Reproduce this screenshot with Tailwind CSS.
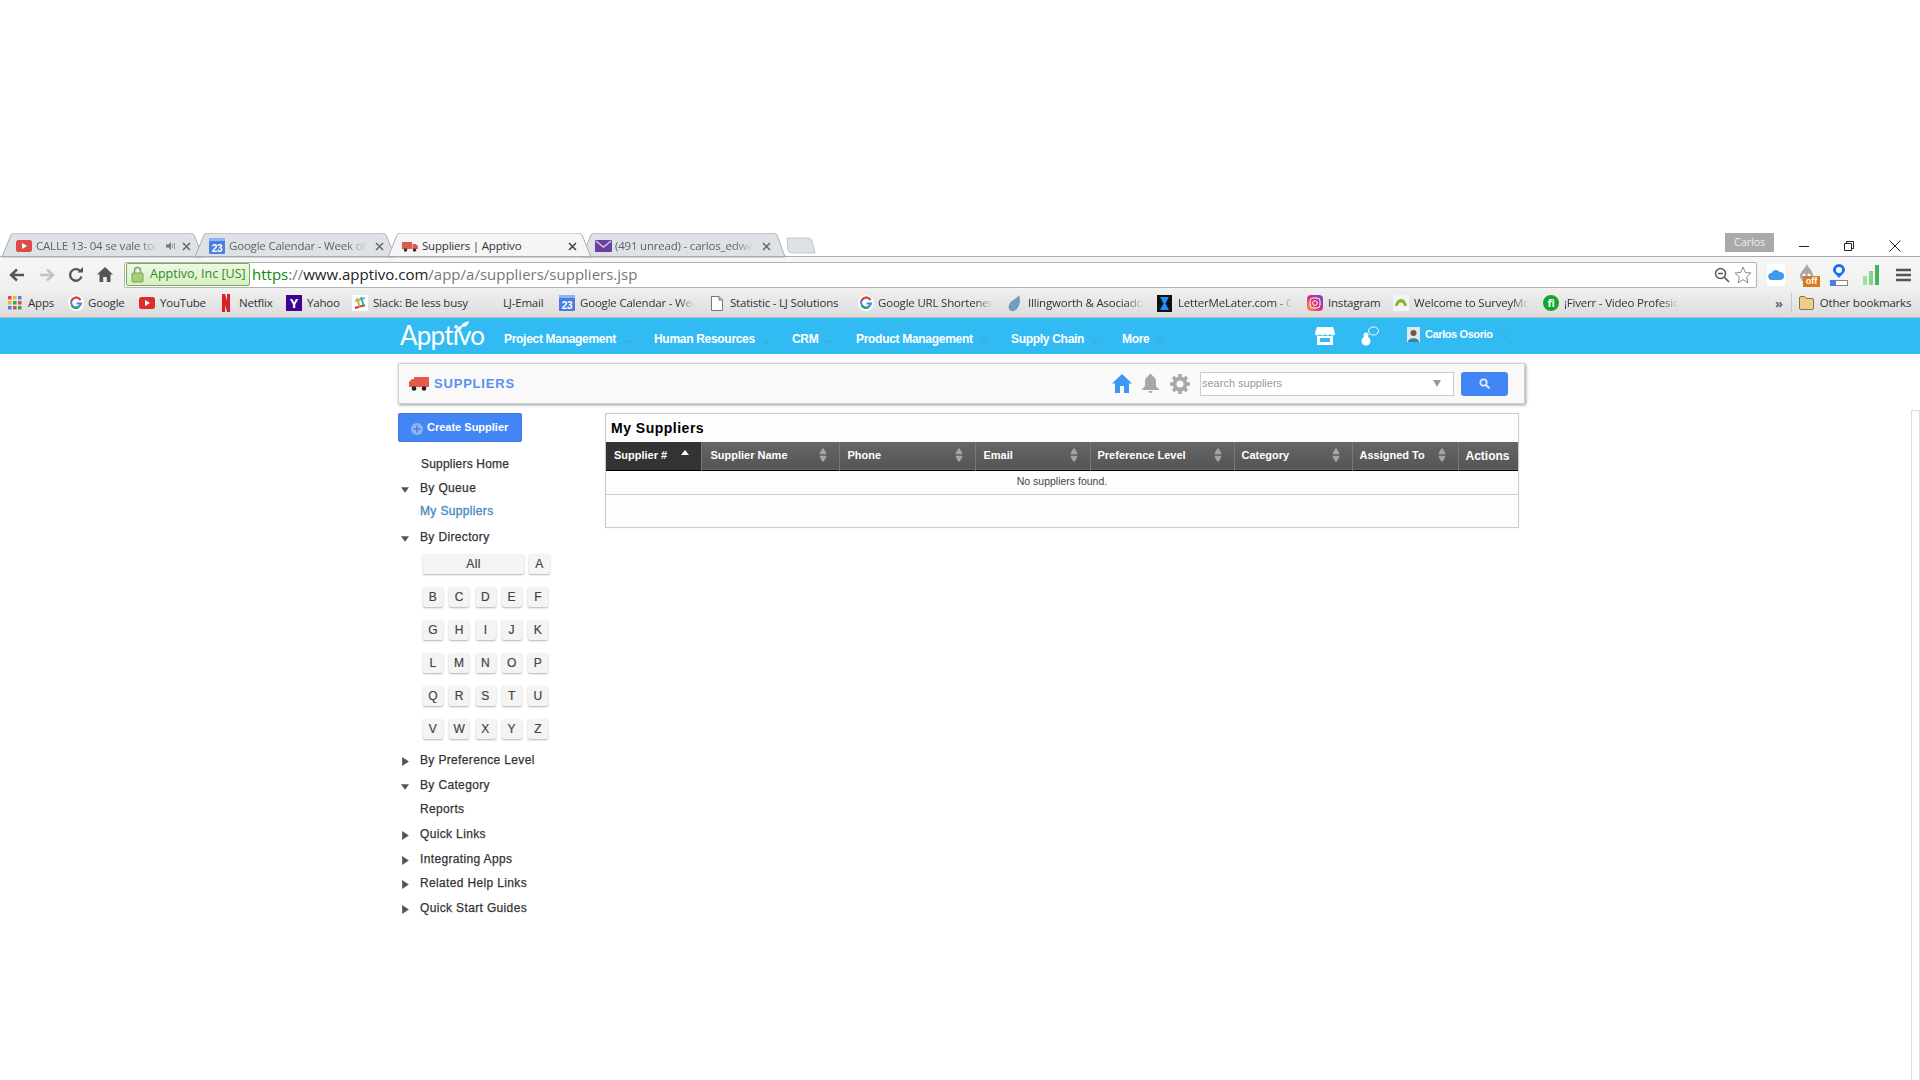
<!DOCTYPE html>
<html lang="en">

<head>
    <meta charset="UTF-8">
    <title>Suppliers | Apptivo</title>
    <script src="https://cdn.jsdelivr.net/npm/@tailwindcss/browser@4"></script>
</head>

<body class="bg-white">
    <div class="relative w-[1920px] h-[1080px] overflow-hidden bg-white font-['Liberation_Sans',sans-serif]">
        <!-- collapsed side panel on the right edge -->
        <div class="absolute left-[1911px] top-[410px] w-[9px] h-[670px] border-l border-t border-r border-[#dddddd]"></div>

        <div class="h-[233px]"></div>

        <!-- browser tabs -->
        <div class="relative h-[24px] font-['Open_Sans',sans-serif] text-[11.5px] tracking-[-0.2px] text-[#5f6368]">
            <svg class="absolute left-0 top-0" width="820" height="25" viewBox="0 0 820 25">
                <path d="M2 24 L11 2 Q12 0 15 0 L190 0 Q193 0 194 2 L203 24 Z" fill="#dee1e6" stroke="#a9abb0" />
                <path d="M195 24 L204 2 Q205 0 208 0 L382 0 Q385 0 386 2 L395 24 Z" fill="#dee1e6" stroke="#a9abb0" />
                <path d="M582 24 L591 2 Q592 0 595 0 L773 0 Q776 0 777 2 L785 24 Z" fill="#dee1e6" stroke="#a9abb0" />
                <path d="M388 24 L397 2 Q398 0 401 0 L578 0 Q581 0 582 2 L591 24 Z" fill="#f5f5f5" stroke="#a9abb0" />
                <path d="M787 5 L808 5 Q811 5 812 8 L815 20 L792 20 Q789 20 788 17 Z" fill="#dee1e6" stroke="#c4c6ca" />
            </svg>
            <div class="absolute left-0 right-0 top-[23px] h-px bg-[#a9abb0]"></div>
            <div class="relative flex h-full pl-[16px] pr-[19px] pt-[2px]">
                <div class="flex items-center w-[193px]">
                    <svg width="16" height="12" viewBox="0 0 16 12"><rect width="16" height="12" rx="2.5" fill="#dd4b4b" /><path d="M6 3 L11 6 L6 9 Z" fill="#fff" /></svg>
                    <span class="ml-[4px] w-[122px] overflow-hidden whitespace-nowrap [mask-image:linear-gradient(90deg,#000_85%,transparent)]">CALLE 13- 04 se vale tocar</span>
                    <svg class="ml-[8px]" width="10" height="10" viewBox="0 0 10 10"><path d="M0 3.5 H2.5 L5 1 V9 L2.5 6.5 H0 Z" fill="#777" /><path d="M6.5 3 V7 M8.5 2 V8" stroke="#999" /></svg>
                    <svg class="ml-[6px]" width="9" height="9" viewBox="0 0 9 9"><path d="M1 1 L8 8 M8 1 L1 8" stroke="#6b6b6b" stroke-width="1.6" /></svg>
                </div>
                <div class="flex items-center w-[193px]">
                    <svg width="16" height="16" viewBox="0 0 16 16"><rect width="16" height="16" rx="1" fill="#4a7fe0" /><rect width="16" height="3" fill="#8fb3f0" /><text x="8" y="13.5" font-size="10" font-weight="700" text-anchor="middle" fill="#fff" font-family="Liberation Sans">23</text></svg>
                    <span class="ml-[4px] w-[138px] overflow-hidden whitespace-nowrap [mask-image:linear-gradient(90deg,#000_85%,transparent)]">Google Calendar - Week of</span>
                    <svg class="ml-[8px]" width="9" height="9" viewBox="0 0 9 9"><path d="M1 1 L8 8 M8 1 L1 8" stroke="#6b6b6b" stroke-width="1.6" /></svg>
                </div>
                <div class="flex items-center w-[193px] text-[#333]">
                    <svg width="16" height="12" viewBox="0 0 16 12"><path d="M0 2 H10 V9 H0 Z M10.500 4 H14 L16 6.500 V9 H10.500 Z" fill="#dd5a4d" /><circle cx="3.500" cy="10" r="1.800" fill="#333" /><circle cx="12.500" cy="10" r="1.800" fill="#333" /></svg>
                    <span class="ml-[4px] w-[146px] whitespace-nowrap">Suppliers | Apptivo</span>
                    <svg width="9" height="9" viewBox="0 0 9 9"><path d="M1 1 L8 8 M8 1 L1 8" stroke="#444" stroke-width="1.6" /></svg>
                </div>
                <div class="flex items-center w-[180px]">
                    <svg width="17" height="12" viewBox="0 0 17 12"><rect width="17" height="12" rx="1" fill="#6b3fa0" /><path d="M1 1 L8.500 7 L16 1" fill="none" stroke="#d9c7ee" stroke-width="1.500" /></svg>
                    <span class="ml-[3px] w-[139px] overflow-hidden whitespace-nowrap [mask-image:linear-gradient(90deg,#000_85%,transparent)]">(491 unread) - carlos_edward</span>
                    <svg class="ml-[8px]" width="9" height="9" viewBox="0 0 9 9"><path d="M1 1 L8 8 M8 1 L1 8" stroke="#6b6b6b" stroke-width="1.6" /></svg>
                </div>
                <div class="flex-1"></div>
                <div class="h-[19px] w-[49px] mr-[26px] -mt-[2px] bg-[#aaaaaa] text-[#eee] text-[11px] flex items-center justify-center">Carlos</div>
                <div class="flex items-center gap-[35px] h-[22px] -ml-[1px]">
                    <svg width="10" height="10" viewBox="0 0 10 10"><path d="M0 5.500 H10" stroke="#222" /></svg>
                    <svg width="10" height="10" viewBox="0 0 10 10"><path d="M0.500 2.500 H7.500 V9.500 H0.500 Z M2.500 2.500 V0.500 H9.500 V7.500 H7.500" fill="none" stroke="#222" /></svg>
                    <svg width="12" height="12" viewBox="0 0 12 12"><path d="M0.500 0.500 L11.500 11.500 M11.500 0.500 L0.500 11.500" stroke="#222" /></svg>
                </div>
            </div>
        </div>

        <!-- address bar -->
        <div class="flex items-center h-[32px] pt-[3px] pl-[9px] pr-[8px] bg-gradient-to-b from-[#f6f6f6] to-[#f0f0f0]">
            <svg width="16" height="14" viewBox="0 0 16 14"><path d="M15 7 H3 M8 1.500 L2 7 L8 12.500" fill="none" stroke="#555" stroke-width="2.400" /></svg>
            <svg class="ml-[14px]" width="16" height="14" viewBox="0 0 16 14"><path d="M1 7 H13 M8 1.500 L14 7 L8 12.500" fill="none" stroke="#c2c2c2" stroke-width="2.400" /></svg>
            <svg class="ml-[13px]" width="16" height="16" viewBox="0 0 16 16"><path d="M13.500 9.500 A5.800 5.800 0 1 1 12 3.800" fill="none" stroke="#555" stroke-width="2.300" /><path d="M9.500 5.500 H15 V0 Z" fill="#555" /></svg>
            <svg class="ml-[13px]" width="16" height="15" viewBox="0 0 16 15"><path d="M8 0 L16 7.500 H13.500 V15 H9.800 V10 H6.200 V15 H2.500 V7.500 H0 Z" fill="#555" /></svg>
            <div class="ml-[11px] flex items-center w-[1633px] h-[26px] bg-white border border-[#b4b4b4] rounded-[2px] pl-[1px] pr-[4px]">
                <div class="flex items-center w-[124px] h-[23px] bg-gradient-to-b from-[#eef8e2] to-[#d9efc4] border border-[#74ad55] rounded-[2px] pl-[4px]">
                    <svg width="13" height="17" viewBox="0 0 13 17"><path d="M3.500 7 V4.500 A3 3 0 0 1 9.500 4.500 V7" fill="none" stroke="#8a9a80" stroke-width="1.500" /><rect x="1" y="7" width="11" height="9" rx="1" fill="#a6cf76" stroke="#7da35a" /></svg>
                    <span class="ml-[6px] text-[12.5px] text-[#2e8b1f] font-['Open_Sans',sans-serif] whitespace-nowrap">Apptivo, Inc [US]</span>
                </div>
                <div class="ml-[2px] text-[15px] font-['Open_Sans',sans-serif] whitespace-nowrap text-[#777]"><span class="text-[#0a8a0a]">https</span>://<span class="text-[#222]">www.apptivo.com</span>/app/a/suppliers/suppliers.jsp</div>
                <div class="flex-1"></div>
                <svg width="16" height="16" viewBox="0 0 16 16"><circle cx="6.500" cy="6.500" r="5" fill="none" stroke="#555" stroke-width="1.500" /><path d="M4 6.500 H9 M10.500 10.500 L15 15" stroke="#555" stroke-width="1.600" /></svg>
                <svg class="ml-[4px]" width="18" height="18" viewBox="0 0 18 18"><path d="M9 1 L11.300 6.500 L17 7 L12.700 10.800 L14 16.800 L9 13.600 L4 16.800 L5.300 10.800 L1 7 L6.700 6.500 Z" fill="#fff" stroke="#8a8a8a" /></svg>
            </div>
            <div class="ml-[10px] flex items-center justify-center w-[18px] h-[22px] bg-white rounded-[3px]">
                <svg width="16" height="11" viewBox="0 0 16 11"><path d="M4 11 A3.500 3.500 0 0 1 3.500 4 A4.500 4.500 0 0 1 11.500 3 A4 4 0 0 1 12.500 11 Z" fill="#3e9bea" /></svg>
            </div>
            <div class="ml-[13px] relative w-[22px] h-[24px] mt-[2px]">
                <svg width="18" height="20" viewBox="0 0 18 20"><path d="M9 0 C10 4 15 6 15 12 A6.500 6.500 0 0 1 2 12 C2 8 6 6 9 0 Z" fill="#a8a8a8" /><circle cx="6" cy="11" r="1.500" fill="#fff" /><circle cx="11" cy="11" r="1.500" fill="#fff" /></svg>
                <span class="absolute left-[5px] top-[12px] w-[17px] h-[11px] bg-[#d9791c] text-white text-[9px] font-bold leading-[11px] text-center">off</span>
            </div>
            <svg class="ml-[9px]" width="20" height="22" viewBox="0 0 20 22"><path d="M10 0 A6 6 0 0 1 16 6 C16 9 12 11 10 14 C8 11 4 9 4 6 A6 6 0 0 1 10 0 Z" fill="#1a73e8" /><circle cx="10" cy="6" r="3" fill="#fff" /><rect x="1.500" y="16.500" width="17" height="5" fill="#fff" stroke="#888" /><rect x="1" y="16" width="6" height="6" fill="#4a7fe0" /></svg>
            <svg class="ml-[14px]" width="16" height="20" viewBox="0 0 16 20"><rect y="11" width="4" height="9" fill="#9be29b" /><rect x="6" y="6" width="4" height="14" fill="#7fd68a" /><rect x="12" y="0" width="4" height="20" fill="#47b35f" /></svg>
            <svg class="ml-[17px]" width="15" height="14" viewBox="0 0 15 14"><path d="M0 2 H15 M0 7 H15 M0 12 H15" stroke="#555" stroke-width="2.600" /></svg>
        </div>

        <!-- bookmarks -->
        <div class="flex items-center h-[29px] pl-[8px] bg-gradient-to-b from-[#f0f0f0] to-[#dcdcdc] border-b border-[#b8b8b8] text-[11.5px] tracking-[-0.2px] text-[#333] font-['Open_Sans',sans-serif] whitespace-nowrap">
            <div class="flex items-center w-[60px]">
                <svg width="14" height="14" viewBox="0 0 14 14"><rect width="3.500" height="3.500" fill="#e04a3f" /><rect x="5" width="3.500" height="3.500" fill="#f2b632" /><rect x="10" width="3.500" height="3.500" fill="#4285f4" /><rect y="5" width="3.500" height="3.500" fill="#f2b632" /><rect x="5" y="5" width="3.500" height="3.500" fill="#34a853" /><rect x="10" y="5" width="3.500" height="3.500" fill="#e04a3f" /><rect y="10" width="3.500" height="3.500" fill="#4285f4" /><rect x="5" y="10" width="3.500" height="3.500" fill="#e04a3f" /><rect x="10" y="10" width="3.500" height="3.500" fill="#34a853" /></svg>
                <span class="ml-[6px]">Apps</span>
            </div>
            <div class="flex items-center w-[71px]">
                <svg width="16" height="16" viewBox="0 0 16 16"><circle cx="8" cy="8" r="8" fill="#fff" /><path d="M12.500 5 A5 5 0 1 0 13 8.500 H8.500" fill="none" stroke="#4285f4" stroke-width="2" /><path d="M12.500 5 A5 5 0 0 0 3.500 6" fill="none" stroke="#ea4335" stroke-width="2" /><path d="M3.500 10.500 A5 5 0 0 0 11 12" fill="none" stroke="#34a853" stroke-width="2" /></svg>
                <span class="ml-[4px]">Google</span>
            </div>
            <div class="flex items-center w-[81px]">
                <svg width="16" height="12" viewBox="0 0 16 12"><rect width="16" height="12" rx="2.500" fill="#dd2c2c" /><path d="M6 3 L11 6 L6 9 Z" fill="#fff" /></svg>
                <span class="ml-[5px]">YouTube</span>
            </div>
            <div class="flex items-center w-[66px]">
                <svg class="ml-[2px]" width="8" height="18" viewBox="0 0 8 18"><path d="M0 0 H3 L5 7 V0 H8 V18 H5 L3 11 V18 H0 Z" fill="#d81f26" /></svg>
                <span class="ml-[9px]">Netflix</span>
            </div>
            <div class="flex items-center w-[66px]">
                <div class="w-[16px] h-[16px] bg-[#400090] text-white text-[13px] font-bold leading-[16px] text-center">Y</div>
                <span class="ml-[5px]">Yahoo</span>
            </div>
            <div class="flex items-center w-[130px]">
                <svg width="16" height="16" viewBox="0 0 16 16"><rect width="16" height="16" fill="#fff" /><path d="M3 6 L13 3" stroke="#62c5d8" stroke-width="2" /><path d="M3 13 L13 10" stroke="#e01e5a" stroke-width="2" /><path d="M5 3 L8 13" stroke="#e9a820" stroke-width="2" /><path d="M9 2 L12 12" stroke="#3eb991" stroke-width="2" /></svg>
                <span class="ml-[5px]">Slack: Be less busy</span>
            </div>
            <div class="w-[77px] pl-[21px]">LJ-Email</div>
            <div class="flex items-center w-[152px]">
                <svg width="16" height="16" viewBox="0 0 16 16"><rect width="16" height="16" rx="1" fill="#4a7fe0" /><rect width="16" height="3" fill="#8fb3f0" /><text x="8" y="13.500" font-size="10" font-weight="700" text-anchor="middle" fill="#fff" font-family="Liberation Sans">23</text></svg>
                <span class="ml-[5px] w-[115px] overflow-hidden [mask-image:linear-gradient(90deg,#000_85%,transparent)]">Google Calendar - Week</span>
            </div>
            <div class="flex items-center w-[147px]">
                <svg width="12" height="15" viewBox="0 0 12 15"><path d="M0.500 0.500 H8 L11.500 4 V14.500 H0.500 Z M8 0.500 V4 H11.500" fill="#fff" stroke="#777" /></svg>
                <span class="ml-[7px]">Statistic - LJ Solutions</span>
            </div>
            <div class="flex items-center w-[149px]">
                <svg width="16" height="16" viewBox="0 0 16 16"><circle cx="8" cy="8" r="8" fill="#fff" /><path d="M12.500 5 A5 5 0 1 0 13 8.500 H8.500" fill="none" stroke="#4285f4" stroke-width="2" /><path d="M12.500 5 A5 5 0 0 0 3.500 6" fill="none" stroke="#ea4335" stroke-width="2" /><path d="M3.500 10.500 A5 5 0 0 0 11 12" fill="none" stroke="#34a853" stroke-width="2" /></svg>
                <span class="ml-[4px] w-[115px] overflow-hidden [mask-image:linear-gradient(90deg,#000_85%,transparent)]">Google URL Shortener</span>
            </div>
            <div class="flex items-center w-[150px]">
                <svg width="15" height="17" viewBox="0 0 15 17"><path d="M12 0 C14 6 13 13 7 16 C2 17 0 12 3 8 C5 5 9 4 12 0 Z" fill="#6f9fb8" /></svg>
                <span class="ml-[6px] w-[115px] overflow-hidden [mask-image:linear-gradient(90deg,#000_85%,transparent)]">Illingworth &amp; Asociados</span>
            </div>
            <div class="flex items-center w-[150px]">
                <svg width="15" height="17" viewBox="0 0 15 17"><rect width="15" height="17" fill="#111" /><path d="M3 2 H12 L8.500 8.500 L12 15 H3 L6.500 8.500 Z" fill="#1e90ff" /></svg>
                <span class="ml-[6px] w-[115px] overflow-hidden [mask-image:linear-gradient(90deg,#000_85%,transparent)]">LetterMeLater.com - Cor</span>
            </div>
            <div class="flex items-center w-[86px]">
                <svg width="16" height="16" viewBox="0 0 16 16"><defs><linearGradient id="ig" x1="0" y1="1" x2="1" y2="0"><stop offset="0" stop-color="#f9a23c" /><stop offset="0.500" stop-color="#d62f7e" /><stop offset="1" stop-color="#6a4bd0" /></linearGradient></defs><rect width="16" height="16" rx="4" fill="url(#ig)" /><rect x="3" y="3" width="10" height="10" rx="3" fill="none" stroke="#fff" /><circle cx="8" cy="8" r="2.300" fill="none" stroke="#fff" /></svg>
                <span class="ml-[5px]">Instagram</span>
            </div>
            <div class="flex items-center w-[150px]">
                <svg width="16" height="16" viewBox="0 0 16 16"><rect width="16" height="16" fill="#f4f4f4" /><path d="M2 11 C3 5 6 4 8 4 C10 4 13 5 14 11 L11 11 C10.500 8 9 7.500 8 7.500 C7 7.500 5.500 8 5 11 Z" fill="#8ab834" /></svg>
                <span class="ml-[5px] w-[115px] overflow-hidden [mask-image:linear-gradient(90deg,#000_85%,transparent)]">Welcome to SurveyMonkey</span>
            </div>
            <div class="flex items-center w-[232px]">
                <div class="w-[16px] h-[16px] rounded-full bg-[#11a82c] text-white text-[11px] font-bold leading-[16px] text-center">fi</div>
                <span class="ml-[5px] w-[115px] overflow-hidden [mask-image:linear-gradient(90deg,#000_85%,transparent)]">¡Fiverr - Video Profesional</span>
            </div>
            <span class="text-[#666] font-bold text-[13px] leading-none">»</span>
            <div class="ml-[8px] w-px h-[20px] bg-[#c8c8c8]"></div>
            <svg class="ml-[7px]" width="15" height="14" viewBox="0 0 15 14"><path d="M0.500 2 Q0.500 0.500 2 0.500 H5.500 L7 2.500 H13 Q14.500 2.500 14.500 4 V12 Q14.500 13.500 13 13.500 H2 Q0.500 13.500 0.500 12 Z" fill="#f1cc8a" stroke="#8b7043" /></svg>
            <span class="ml-[6px]">Other bookmarks</span>
        </div>

        <!-- app nav -->
        <div class="flex items-center h-[36px] pl-[400px] bg-[#32bbf3] text-white text-[12px] font-bold">
            <div class="relative w-[104px] h-full text-[26px] font-['Lato',sans-serif] font-normal leading-[34px] tracking-[-0.8px]">Apptivo
                <svg class="absolute left-[55px] top-[3px]" width="16" height="12" viewBox="0 0 16 12"><path d="M1 11 C1 6 5 5 7 5 C7 8 5 11 1 11 Z M6 5 C7 2 11 1 14 0 C14 3 11 6 8 6 Z" fill="#fff" /></svg>
            </div>
            <div class="flex items-center w-[150px] pt-[5px]"><span class="tracking-[-0.3px]">Project Management</span><svg class="ml-[7px] mt-[5px]" width="8" height="5" viewBox="0 0 8 5"><path d="M1 1 L4 4 L7 1" fill="none" stroke="#5f97b0" /></svg></div>
            <div class="flex items-center w-[138px] pt-[5px]"><span class="tracking-[-0.3px]">Human Resources</span><svg class="ml-[7px] mt-[5px]" width="8" height="5" viewBox="0 0 8 5"><path d="M1 1 L4 4 L7 1" fill="none" stroke="#5f97b0" /></svg></div>
            <div class="flex items-center w-[64px] pt-[5px]"><span class="tracking-[-0.3px]">CRM</span><svg class="ml-[7px] mt-[5px]" width="8" height="5" viewBox="0 0 8 5"><path d="M1 1 L4 4 L7 1" fill="none" stroke="#5f97b0" /></svg></div>
            <div class="flex items-center w-[155px] pt-[5px]"><span class="tracking-[-0.3px]">Product Management</span><svg class="ml-[7px] mt-[5px]" width="8" height="5" viewBox="0 0 8 5"><path d="M1 1 L4 4 L7 1" fill="none" stroke="#5f97b0" /></svg></div>
            <div class="flex items-center w-[111px] pt-[5px]"><span class="tracking-[-0.3px]">Supply Chain</span><svg class="ml-[7px] mt-[5px]" width="8" height="5" viewBox="0 0 8 5"><path d="M1 1 L4 4 L7 1" fill="none" stroke="#5f97b0" /></svg></div>
            <div class="flex items-center w-[193px] pt-[5px]"><span class="tracking-[-0.3px]">More</span><svg class="ml-[7px] mt-[5px]" width="8" height="5" viewBox="0 0 8 5"><path d="M1 1 L4 4 L7 1" fill="none" stroke="#5f97b0" /></svg></div>
            <svg width="20" height="18" viewBox="0 0 20 18"><path d="M2 0 H18 L20 6 A2.500 2.500 0 0 1 15 6 A2.500 2.500 0 0 1 10 6 A2.500 2.500 0 0 1 5 6 A2.500 2.500 0 0 1 0 6 Z" fill="#fff" /><path d="M2 9 H18 V18 H2 Z M5 11 V15 H15 V11 Z" fill="#fff" /></svg>
            <svg class="ml-[26px]" width="18" height="20" viewBox="0 0 18 20"><circle cx="5" cy="15" r="4.500" fill="#fff" /><circle cx="5" cy="9" r="2.500" fill="#fff" /><ellipse cx="12.500" cy="5" rx="5" ry="4" fill="none" stroke="#fff" /></svg>
            <div class="ml-[28px] mb-[4px] w-[13px] h-[15px] bg-[#dfe8ee] flex items-end justify-center overflow-hidden">
                <svg width="11" height="13" viewBox="0 0 11 13"><circle cx="5.500" cy="4" r="3" fill="#6b5a4e" /><path d="M0 13 C0 8 11 8 11 13 Z" fill="#3f7fa6" /></svg>
            </div>
            <span class="ml-[5px] mb-[4px] tracking-[-0.4px] text-[11px]">Carlos Osorio</span>
            <svg class="ml-[8px] mb-[1px]" width="8" height="5" viewBox="0 0 8 5"><path d="M1 1 L4 4 L7 1" fill="none" stroke="#5f97b0" /></svg>
        </div>

        <div class="ml-[398px] w-[1127px] pt-[9px]">
            <!-- module header -->
            <div class="flex items-center h-[41px] pl-[10px] pr-[16px] bg-[#f9f9f9] border border-[#d2d2d2] shadow-[1px_1px_3px_rgba(0,0,0,0.4)]">
                <svg width="20" height="14" viewBox="0 0 20 14"><path d="M5 0 H20 V10 H0 V5 L3 2 H5 Z" fill="#e8574c" /><circle cx="5" cy="11.500" r="2.300" fill="#222" /><circle cx="15" cy="11.500" r="2.300" fill="#222" /></svg>
                <span class="ml-[5px] text-[13px] font-bold tracking-[0.8px] text-[#5b8ff0]">SUPPLIERS</span>
                <div class="flex-1"></div>
                <svg width="20" height="19" viewBox="0 0 20 19"><path d="M10 0 L20 9.500 H17 V19 H12 V12 H8 V19 H3 V9.500 H0 Z" fill="#3f97f5" /></svg>
                <svg class="ml-[9px]" width="19" height="19" viewBox="0 0 19 19"><path d="M9.500 0 A2 2 0 0 1 11.500 2 C14 3 15 5 15 8 V12 L18.500 16 H0.500 L4 12 V8 C4 5 5 3 7.500 2 A2 2 0 0 1 9.500 0 Z M7.500 17 H11.500 A2 2 0 0 1 7.500 17 Z" fill="#a8a8a8" /></svg>
                <svg class="ml-[10px]" width="20" height="20" viewBox="0 0 20 20"><circle cx="10" cy="10" r="5.500" fill="none" stroke="#a8a8a8" stroke-width="4" /><path d="M10 0 V4 M10 16 V20 M0 10 H4 M16 10 H20 M3 3 L5.800 5.800 M14.200 14.200 L17 17 M17 3 L14.200 5.800 M5.800 14.200 L3 17" stroke="#a8a8a8" stroke-width="3.500" /></svg>
                <div class="ml-[10px] flex items-center justify-between w-[254px] h-[24px] pl-[1px] pr-[12px] bg-white border border-[#cccccc] text-[11px] text-[#999]">
                    <span>search suppliers</span>
                    <svg width="8" height="7" viewBox="0 0 8 7"><path d="M0 0 H8 L4 7 Z" fill="#999" /></svg>
                </div>
                <div class="ml-[7px] flex items-center justify-center w-[47px] h-[24px] bg-[#4285f4] rounded-[3px]">
                    <svg width="11" height="11" viewBox="0 0 11 11"><circle cx="4.500" cy="4.500" r="3.200" fill="none" stroke="#dce8ff" stroke-width="1.800" /><path d="M7 7 L10.500 10.500" stroke="#dce8ff" stroke-width="2" /></svg>
                </div>
            </div>

            <div class="flex pt-[9px]">
                <!-- sidebar -->
                <div class="w-[207px] text-[12px] text-[#333] [-webkit-text-stroke:0.25px] tracking-[0.35px]">
                    <div class="flex items-center w-[124px] h-[29px] pl-[12px] bg-[#4285f4] border border-[#3b78e0] rounded-[2px] text-[11px] font-bold text-white [-webkit-text-stroke:0px] tracking-[0px]">
                        <svg class="mt-[2px]" width="12" height="12" viewBox="0 0 12 12"><circle cx="6" cy="6" r="6" fill="#8fb3f5" /><path d="M6 2.500 V9.500 M2.500 6 H9.500" stroke="#4f7fdc" stroke-width="1.600" /></svg>
                        <span class="ml-[4px]">Create Supplier</span>
                    </div>
                    <div class="flex items-center h-[24px] mt-[10px] pl-[23px] tracking-[0.2px]">Suppliers Home</div>
                    <div class="flex items-center h-[24px] pl-[3px]"><svg class="mr-[11px] mt-[3px]" width="8" height="6" viewBox="0 0 9 6"><path d="M0 0 H9 L4.500 6 Z" fill="#555" /></svg>By Queue</div>
                    <div class="flex items-center h-[22px] pl-[22px] text-[#4a8ac4] [-webkit-text-stroke:0.35px]">My Suppliers</div>
                    <div class="flex items-center h-[24px] mt-[3px] pl-[3px]"><svg class="mr-[11px] mt-[3px]" width="8" height="6" viewBox="0 0 9 6"><path d="M0 0 H9 L4.500 6 Z" fill="#555" /></svg>By Directory</div>

                    <div class="ml-[25px] mt-[5px] flex flex-col gap-[13px] text-[#444] [-webkit-text-stroke:0.2px]">
                        <div class="flex gap-[5px]">
                            <div class="w-[101px] h-[20px] flex items-center justify-center bg-[#f4f4f4] rounded-[2px] shadow-[0_1px_2px_rgba(0,0,0,0.3)]">All</div>
                            <div class="w-[21px] h-[20px] flex items-center justify-center bg-[#f4f4f4] rounded-[2px] shadow-[0_1px_2px_rgba(0,0,0,0.3)]">A</div>
                        </div>
                        <div class="grid grid-cols-[20px_20px_20px_20px_20px] gap-x-[6.25px] gap-y-[13px]">
                            <div class="h-[20px] flex items-center justify-center bg-[#f4f4f4] rounded-[2px] shadow-[0_1px_2px_rgba(0,0,0,0.3)]">B</div>
                            <div class="h-[20px] flex items-center justify-center bg-[#f4f4f4] rounded-[2px] shadow-[0_1px_2px_rgba(0,0,0,0.3)]">C</div>
                            <div class="h-[20px] flex items-center justify-center bg-[#f4f4f4] rounded-[2px] shadow-[0_1px_2px_rgba(0,0,0,0.3)]">D</div>
                            <div class="h-[20px] flex items-center justify-center bg-[#f4f4f4] rounded-[2px] shadow-[0_1px_2px_rgba(0,0,0,0.3)]">E</div>
                            <div class="h-[20px] flex items-center justify-center bg-[#f4f4f4] rounded-[2px] shadow-[0_1px_2px_rgba(0,0,0,0.3)]">F</div>
                            <div class="h-[20px] flex items-center justify-center bg-[#f4f4f4] rounded-[2px] shadow-[0_1px_2px_rgba(0,0,0,0.3)]">G</div>
                            <div class="h-[20px] flex items-center justify-center bg-[#f4f4f4] rounded-[2px] shadow-[0_1px_2px_rgba(0,0,0,0.3)]">H</div>
                            <div class="h-[20px] flex items-center justify-center bg-[#f4f4f4] rounded-[2px] shadow-[0_1px_2px_rgba(0,0,0,0.3)]">I</div>
                            <div class="h-[20px] flex items-center justify-center bg-[#f4f4f4] rounded-[2px] shadow-[0_1px_2px_rgba(0,0,0,0.3)]">J</div>
                            <div class="h-[20px] flex items-center justify-center bg-[#f4f4f4] rounded-[2px] shadow-[0_1px_2px_rgba(0,0,0,0.3)]">K</div>
                            <div class="h-[20px] flex items-center justify-center bg-[#f4f4f4] rounded-[2px] shadow-[0_1px_2px_rgba(0,0,0,0.3)]">L</div>
                            <div class="h-[20px] flex items-center justify-center bg-[#f4f4f4] rounded-[2px] shadow-[0_1px_2px_rgba(0,0,0,0.3)]">M</div>
                            <div class="h-[20px] flex items-center justify-center bg-[#f4f4f4] rounded-[2px] shadow-[0_1px_2px_rgba(0,0,0,0.3)]">N</div>
                            <div class="h-[20px] flex items-center justify-center bg-[#f4f4f4] rounded-[2px] shadow-[0_1px_2px_rgba(0,0,0,0.3)]">O</div>
                            <div class="h-[20px] flex items-center justify-center bg-[#f4f4f4] rounded-[2px] shadow-[0_1px_2px_rgba(0,0,0,0.3)]">P</div>
                            <div class="h-[20px] flex items-center justify-center bg-[#f4f4f4] rounded-[2px] shadow-[0_1px_2px_rgba(0,0,0,0.3)]">Q</div>
                            <div class="h-[20px] flex items-center justify-center bg-[#f4f4f4] rounded-[2px] shadow-[0_1px_2px_rgba(0,0,0,0.3)]">R</div>
                            <div class="h-[20px] flex items-center justify-center bg-[#f4f4f4] rounded-[2px] shadow-[0_1px_2px_rgba(0,0,0,0.3)]">S</div>
                            <div class="h-[20px] flex items-center justify-center bg-[#f4f4f4] rounded-[2px] shadow-[0_1px_2px_rgba(0,0,0,0.3)]">T</div>
                            <div class="h-[20px] flex items-center justify-center bg-[#f4f4f4] rounded-[2px] shadow-[0_1px_2px_rgba(0,0,0,0.3)]">U</div>
                            <div class="h-[20px] flex items-center justify-center bg-[#f4f4f4] rounded-[2px] shadow-[0_1px_2px_rgba(0,0,0,0.3)]">V</div>
                            <div class="h-[20px] flex items-center justify-center bg-[#f4f4f4] rounded-[2px] shadow-[0_1px_2px_rgba(0,0,0,0.3)]">W</div>
                            <div class="h-[20px] flex items-center justify-center bg-[#f4f4f4] rounded-[2px] shadow-[0_1px_2px_rgba(0,0,0,0.3)]">X</div>
                            <div class="h-[20px] flex items-center justify-center bg-[#f4f4f4] rounded-[2px] shadow-[0_1px_2px_rgba(0,0,0,0.3)]">Y</div>
                            <div class="h-[20px] flex items-center justify-center bg-[#f4f4f4] rounded-[2px] shadow-[0_1px_2px_rgba(0,0,0,0.3)]">Z</div>
                        </div>
                    </div>

                    <div class="flex items-center h-[24px] mt-[9px] pl-[4px]"><svg class="mr-[11px] mt-[3px]" width="7" height="9" viewBox="0 0 6 8"><path d="M0 0 V8 L6 4 Z" fill="#555" /></svg>By Preference Level</div>
                    <div class="flex items-center h-[24px] mt-[1px] pl-[3px]"><svg class="mr-[11px] mt-[3px]" width="8" height="6" viewBox="0 0 9 6"><path d="M0 0 H9 L4.500 6 Z" fill="#555" /></svg>By Category</div>
                    <div class="flex items-center h-[24px] pl-[22px]">Reports</div>
                    <div class="flex items-center h-[24px] mt-[1px] pl-[4px]"><svg class="mr-[11px] mt-[3px]" width="7" height="9" viewBox="0 0 6 8"><path d="M0 0 V8 L6 4 Z" fill="#555" /></svg>Quick Links</div>
                    <div class="flex items-center h-[24px] mt-[1px] pl-[4px]"><svg class="mr-[11px] mt-[3px]" width="7" height="9" viewBox="0 0 6 8"><path d="M0 0 V8 L6 4 Z" fill="#555" /></svg>Integrating Apps</div>
                    <div class="flex items-center h-[24px] pl-[4px]"><svg class="mr-[11px] mt-[3px]" width="7" height="9" viewBox="0 0 6 8"><path d="M0 0 V8 L6 4 Z" fill="#555" /></svg>Related Help Links</div>
                    <div class="flex items-center h-[24px] mt-[1px] pl-[4px]"><svg class="mr-[11px] mt-[3px]" width="7" height="9" viewBox="0 0 6 8"><path d="M0 0 V8 L6 4 Z" fill="#555" /></svg>Quick Start Guides</div>
                </div>

                <!-- suppliers table -->
                <div class="w-[914px] h-[115px] bg-[#fdfdfd] border border-[#cccccc] shadow-[0_0_1px_rgba(0,0,0,0.15)]">
                    <div class="flex items-center h-[28px] pl-[5px] text-[14px] font-bold tracking-[0.5px] text-black">My Suppliers</div>
                    <table class="w-[912px] table-fixed border-collapse text-[11px] text-white">
                        <thead>
                            <tr class="h-[28px] bg-gradient-to-b from-[#666666] to-[#555555] border-b border-black font-bold text-left">
                                <th class="w-[95px] pl-[8px] pr-[12px] bg-[#333333]">
                                    <div class="flex items-center justify-between pb-[1px]"><span>Supplier #</span><svg class="mb-[5px]" width="8" height="5" viewBox="0 0 8 5"><path d="M4 0 L8 5 H0 Z" fill="#fff" /></svg></div>
                                </th>
                                <th class="w-[138px] pl-[9px] pr-[12px] border-l border-[#777]">
                                    <div class="flex items-center justify-between pb-[1px]"><span>Supplier Name</span><svg width="8" height="14" viewBox="0 0 8 14"><path d="M4 0 C5 1 7 3.500 7.500 6.300 H0.500 C1 3.500 3 1 4 0 Z M4 14 C5 13 7 10.500 7.500 7.700 H0.500 C1 10.500 3 13 4 14 Z" fill="#a5a5a5" /></svg></div>
                                </th>
                                <th class="w-[136px] pl-[8px] pr-[12px] border-l border-[#777]">
                                    <div class="flex items-center justify-between pb-[1px]"><span>Phone</span><svg width="8" height="14" viewBox="0 0 8 14"><path d="M4 0 C5 1 7 3.500 7.500 6.300 H0.500 C1 3.500 3 1 4 0 Z M4 14 C5 13 7 10.500 7.500 7.700 H0.500 C1 10.500 3 13 4 14 Z" fill="#a5a5a5" /></svg></div>
                                </th>
                                <th class="w-[115px] pl-[8px] pr-[12px] border-l border-[#777]">
                                    <div class="flex items-center justify-between pb-[1px]"><span>Email</span><svg width="8" height="14" viewBox="0 0 8 14"><path d="M4 0 C5 1 7 3.500 7.500 6.300 H0.500 C1 3.500 3 1 4 0 Z M4 14 C5 13 7 10.500 7.500 7.700 H0.500 C1 10.500 3 13 4 14 Z" fill="#a5a5a5" /></svg></div>
                                </th>
                                <th class="w-[144px] pl-[7px] pr-[12px] border-l border-[#777]">
                                    <div class="flex items-center justify-between pb-[1px]"><span>Preference Level</span><svg width="8" height="14" viewBox="0 0 8 14"><path d="M4 0 C5 1 7 3.500 7.500 6.300 H0.500 C1 3.500 3 1 4 0 Z M4 14 C5 13 7 10.500 7.500 7.700 H0.500 C1 10.500 3 13 4 14 Z" fill="#a5a5a5" /></svg></div>
                                </th>
                                <th class="w-[118px] pl-[7px] pr-[12px] border-l border-[#777]">
                                    <div class="flex items-center justify-between pb-[1px]"><span>Category</span><svg width="8" height="14" viewBox="0 0 8 14"><path d="M4 0 C5 1 7 3.500 7.500 6.300 H0.500 C1 3.500 3 1 4 0 Z M4 14 C5 13 7 10.500 7.500 7.700 H0.500 C1 10.500 3 13 4 14 Z" fill="#a5a5a5" /></svg></div>
                                </th>
                                <th class="w-[106px] pl-[7px] pr-[12px] border-l border-[#777]">
                                    <div class="flex items-center justify-between pb-[1px]"><span>Assigned To</span><svg width="8" height="14" viewBox="0 0 8 14"><path d="M4 0 C5 1 7 3.500 7.500 6.300 H0.500 C1 3.500 3 1 4 0 Z M4 14 C5 13 7 10.500 7.500 7.700 H0.500 C1 10.500 3 13 4 14 Z" fill="#a5a5a5" /></svg></div>
                                </th>
                                <th class="w-[60px] pl-[7px] border-l border-[#777] text-[12px]">Actions</th>
                            </tr>
                        </thead>
                        <tbody>
                            <tr class="h-[24px] border-b border-[#cccccc]">
                                <td colspan="8" class="text-center text-[10.5px] text-[#444]">No suppliers found.</td>
                            </tr>
                        </tbody>
                    </table>
                </div>
            </div>
        </div>
    </div>
</body>

</html>
